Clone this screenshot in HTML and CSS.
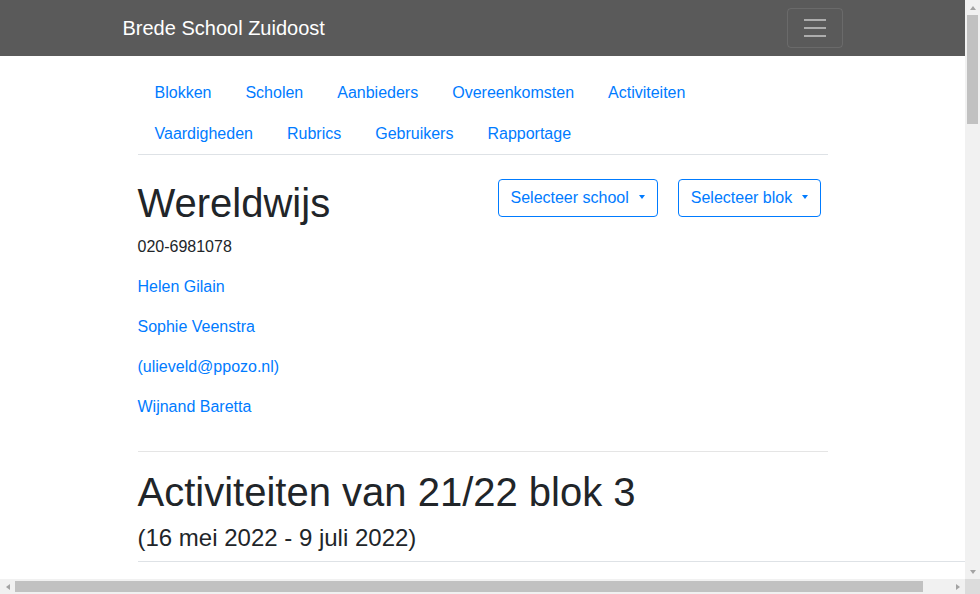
FILE: index.html
```html
<!DOCTYPE html>
<html lang="nl">
<head>
<meta charset="utf-8">
<title>Brede School Zuidoost</title>
<link rel="stylesheet" href="styles.css">
</head>
<body>
<div class="window">
  <div class="viewport">
    <nav class="navbar">
      <div class="navbar-inner">
        <a class="brand" href="#">Brede School Zuidoost</a>
        <button class="toggler" type="button" aria-label="Menu">
          <svg width="30" height="30" viewBox="0 0 30 30" aria-hidden="true">
            <path d="M4 7h22M4 15h22M4 23h22" stroke="rgba(255,255,255,0.5)" stroke-width="2" fill="none"/>
          </svg>
        </button>
      </div>
    </nav>
    <main class="container">
      <ul class="subnav">
        <li><a href="#">Blokken</a></li>
        <li><a href="#">Scholen</a></li>
        <li><a href="#">Aanbieders</a></li>
        <li><a href="#">Overeenkomsten</a></li>
        <li><a href="#">Activiteiten</a></li>
        <li><a href="#">Vaardigheden</a></li>
        <li><a href="#">Rubrics</a></li>
        <li><a href="#">Gebruikers</a></li>
        <li><a href="#">Rapportage</a></li>
      </ul>
      <div class="school-row">
        <div class="col">
          <h1 class="title">Wereldwijs</h1>
          <p class="info">020-6981078</p>
          <p class="info"><a href="#">Helen Gilain</a></p>
          <p class="info"><a href="#">Sophie Veenstra</a></p>
          <p class="info"><a href="#">(ulieveld@ppozo.nl)</a></p>
          <p class="info"><a href="#">Wijnand Baretta</a></p>
        </div>
        <div class="col">
          <div class="selectors">
            <button class="btn-outline" type="button">Selecteer school<span class="caret"></span></button>
            <button class="btn-outline" type="button">Selecteer blok<span class="caret"></span></button>
          </div>
        </div>
      </div>
      <hr class="divider">
      <h1 class="title">Activiteiten van 21/22 blok 3</h1>
      <h4 class="subtitle">(16 mei 2022 - 9 juli 2022)</h4>
      <div class="activity-table"></div>
    </main>
  </div>
  <div class="vscroll" aria-hidden="true">
    <div class="arrow-box"><span class="tri tri-up"></span></div>
    <div class="vtrack"><div class="vthumb"></div></div>
    <div class="arrow-box"><span class="tri tri-down"></span></div>
  </div>
  <div class="hscroll" aria-hidden="true">
    <div class="arrow-box"><span class="tri tri-left"></span></div>
    <div class="htrack"><div class="hthumb"></div></div>
    <div class="arrow-box"><span class="tri tri-right"></span></div>
  </div>
  <div class="corner"></div>
</div>
</body>
</html>
```
FILE: styles.css
```css
html, body {
  margin: 0;
  padding: 0;
  overflow: hidden;
}
body {
  font-family: "Liberation Sans", Arial, sans-serif;
  font-size: 16px;
  line-height: 1.5;
  color: #212529;
  background: #fff;
}
a {
  color: #007bff;
  text-decoration: none;
}
.window {
  display: grid;
  grid-template-columns: 965px 15px;
  grid-template-rows: 579px 15px;
  width: 980px;
  height: 594px;
}
.viewport {
  overflow: hidden;
}
.navbar {
  background: #5a5a5a;
  padding: 8px 0;
}
.navbar-inner {
  width: 720px;
  margin: 0 auto;
  display: flex;
  align-items: center;
  justify-content: space-between;
}
.brand {
  color: #fff;
  font-size: 20px;
  line-height: 30px;
  padding: 5px 0;
}
.toggler {
  width: 56px;
  height: 40px;
  padding: 0;
  background: transparent;
  border: 1px solid rgba(255, 255, 255, 0.1);
  border-radius: 4px;
  display: flex;
  align-items: center;
  justify-content: center;
}
.toggler svg {
  display: block;
}
.container {
  width: 690px;
  margin: 0 auto;
  padding: 0 15px;
}
.subnav {
  list-style: none;
  margin: 16px 0 0;
  padding: 0;
  display: flex;
  flex-wrap: wrap;
  border-bottom: 1px solid #dee2e6;
}
.subnav a {
  display: block;
  padding: 9px 17px 8px;
}
.school-row {
  display: flex;
  margin: 24px -15px 0;
}
.col {
  flex: 0 0 50%;
  box-sizing: border-box;
  padding: 0 15px;
}
.title {
  margin: 0 0 8px;
  font-size: 40px;
  font-weight: 400;
  line-height: 1.2;
}
.info {
  margin: 0 0 16px;
}
.selectors {
  display: flex;
  gap: 20px;
}
.btn-outline {
  font-family: inherit;
  font-size: 16px;
  line-height: 24px;
  padding: 6px 12px;
  color: #007bff;
  background: transparent;
  border: 1px solid #007bff;
  border-radius: 4px;
}
.caret {
  display: inline-block;
  margin-left: 10px;
  vertical-align: 4px;
  border-top: 4px solid;
  border-right: 3.5px solid transparent;
  border-left: 3.5px solid transparent;
}
.divider {
  margin: 16px 0;
  border: 0;
  border-top: 1px solid rgba(0, 0, 0, 0.1);
}
.subtitle {
  margin: 0 0 8px;
  font-size: 24px;
  font-weight: 400;
  line-height: 1.2;
}
.activity-table {
  width: 856px;
  height: 400px;
  border-top: 1px solid #dee2e6;
}

/* scrollbars */
.vscroll {
  background: #f1f1f1;
  display: flex;
  flex-direction: column;
}
.hscroll {
  background: #f1f1f1;
  display: flex;
}
.corner {
  background: #dcdcdc;
}
.arrow-box {
  flex: 0 0 15px;
  width: 15px;
  height: 15px;
  display: flex;
  align-items: center;
  justify-content: center;
}
.vtrack {
  flex: 1;
  padding: 0 2px;
}
.vthumb {
  height: 109px;
  background: #c1c1c1;
}
.htrack {
  flex: 1;
  padding: 2px 0;
}
.hthumb {
  width: 908px;
  height: 11px;
  background: #c1c1c1;
}
.tri {
  display: block;
  width: 0;
  height: 0;
}
.tri-up {
  border-left: 3.5px solid transparent;
  border-right: 3.5px solid transparent;
  border-bottom: 4px solid #a3a3a3;
}
.tri-down {
  border-left: 3.5px solid transparent;
  border-right: 3.5px solid transparent;
  border-top: 4px solid #a3a3a3;
}
.tri-left {
  border-top: 3.5px solid transparent;
  border-bottom: 3.5px solid transparent;
  border-right: 4px solid #a3a3a3;
}
.tri-right {
  border-top: 3.5px solid transparent;
  border-bottom: 3.5px solid transparent;
  border-left: 4px solid #a3a3a3;
}
```
